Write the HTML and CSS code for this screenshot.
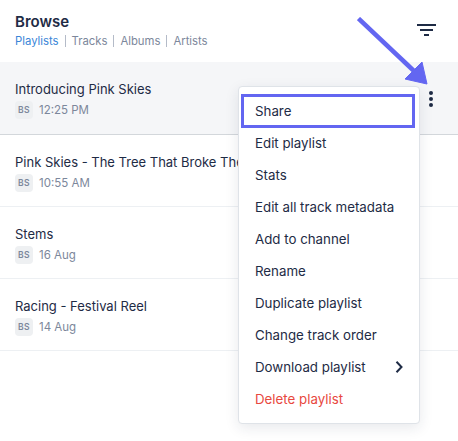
FILE: index.html
```html
<!DOCTYPE html>
<html lang="en">
<head>
<meta charset="utf-8">
<title>Browse</title>
<link rel="stylesheet" href="styles.css">
</head>
<body>
<div class="page">
  <header class="head">
    <div>
      <h1 class="title">Browse</h1>
      <nav class="tabs">
        <a class="tab active">Playlists</a><span class="sep"></span>
        <a class="tab">Tracks</a><span class="sep"></span>
        <a class="tab">Albums</a><span class="sep"></span>
        <a class="tab">Artists</a>
      </nav>
    </div>
    <svg class="filter" width="20" height="14" viewBox="0 0 20 14"><path d="M0 1h19M3 6h13M7 11h5" stroke="#1e2b45" stroke-width="2" fill="none"/></svg>
  </header>
  <ul class="list">
    <li class="row current">
      <div class="name">Introducing Pink Skies</div>
      <div class="meta"><span class="badge">BS</span><span>12:25 PM</span></div>
      <svg class="dots" width="6" height="18" viewBox="0 0 6 18"><circle cx="3" cy="3" r="2" fill="#1e2b45"/><circle cx="3" cy="9" r="2" fill="#1e2b45"/><circle cx="3" cy="15" r="2" fill="#1e2b45"/></svg>
    </li>
    <li class="row">
      <div class="name">Pink Skies - The Tree That Broke The</div>
      <div class="meta"><span class="badge">BS</span><span>10:55 AM</span></div>
    </li>
    <li class="row">
      <div class="name">Stems</div>
      <div class="meta"><span class="badge">BS</span><span>16 Aug</span></div>
    </li>
    <li class="row">
      <div class="name">Racing - Festival Reel</div>
      <div class="meta"><span class="badge">BS</span><span>14 Aug</span></div>
    </li>
  </ul>
  <div class="menu">
    <div class="item focus">Share</div>
    <div class="item">Edit playlist</div>
    <div class="item">Stats</div>
    <div class="item">Edit all track metadata</div>
    <div class="item">Add to channel</div>
    <div class="item">Rename</div>
    <div class="item">Duplicate playlist</div>
    <div class="item">Change track order</div>
    <div class="item">Download playlist
      <svg class="chev" width="8" height="12" viewBox="0 0 8 12"><path d="M1.500 0.800L6.500 6L1.500 11.200" stroke="#1e2b45" stroke-width="2" fill="none"/></svg>
    </div>
    <div class="item danger">Delete playlist</div>
  </div>
  <svg class="arrow" width="80" height="76" viewBox="0 0 80 76"><path d="M1.500 1.500L57 54" stroke="#6366f1" stroke-width="4.500" fill="none"/><path d="M70 67L48 62L65 45Z" fill="#6366f1" stroke="#6366f1" stroke-width="1"/></svg>
</div>
</body>
</html>
```
FILE: styles.css
```css
* { box-sizing: border-box; }
html, body { margin: 0; padding: 0; background: #fff; }
.page {
  position: relative;
  width: 458px;
  height: 441px;
  overflow: hidden;
  font-family: "Inter", "Liberation Sans", sans-serif;
  color: #1e2b45;
}
.head {
  height: 62px;
  padding: 13px 21px 0 15px;
  display: flex;
  justify-content: space-between;
  align-items: flex-start;
}
.title { margin: 0; font-size: 15px; line-height: 18px; font-weight: 600; }
.tabs { display: flex; align-items: center; margin-top: 2px; font-size: 11.300px; line-height: 16px; color: #7c879b; }
.tab.active { color: #3a86d8; }
.sep { width: 1px; height: 12px; background: #b4bbc8; margin: 0 6px; }
.filter { margin-top: 11px; }
.list { list-style: none; margin: 0; padding: 0; }
.row {
  position: relative;
  height: 72px;
  padding: 18px 15px 0;
  border-bottom: 1px solid #edf0f3;
  white-space: nowrap;
  overflow: hidden;
}
.row.current { height: 73px; background: #f5f6f8; border-bottom-color: #d3d7db; }
.name { font-size: 13px; line-height: 18px; }
.meta { display: flex; align-items: center; gap: 6px; margin-top: 3px; font-size: 11.500px; color: #7c879b; }
.badge {
  width: 18px;
  height: 18px;
  border-radius: 4px;
  background: #eef0f2;
  font-size: 8.500px;
  font-weight: 600;
  letter-spacing: 0.5px;
  display: flex;
  align-items: center;
  justify-content: center;
}
.dots { position: absolute; right: 24px; top: 28px; }
.menu {
  position: absolute;
  left: 238px;
  top: 86px;
  width: 182px;
  height: 338px;
  padding: 8px 0;
  background: #fff;
  border: 1px solid #dfe3e8;
  border-radius: 4px;
  box-shadow: 0 4px 14px rgba(30, 43, 69, 0.1);
}
.item {
  height: 32px;
  padding: 0 16px;
  display: flex;
  align-items: center;
  justify-content: space-between;
  font-size: 13.300px;
}
.item.focus { outline: 3px solid #6366f1; outline-offset: -3px; margin: -1px 4px -1px 2px; height: 34px; padding-left: 14px; }
.item.danger { color: #e8483f; }
.arrow { position: absolute; left: 357px; top: 17px; }
```
